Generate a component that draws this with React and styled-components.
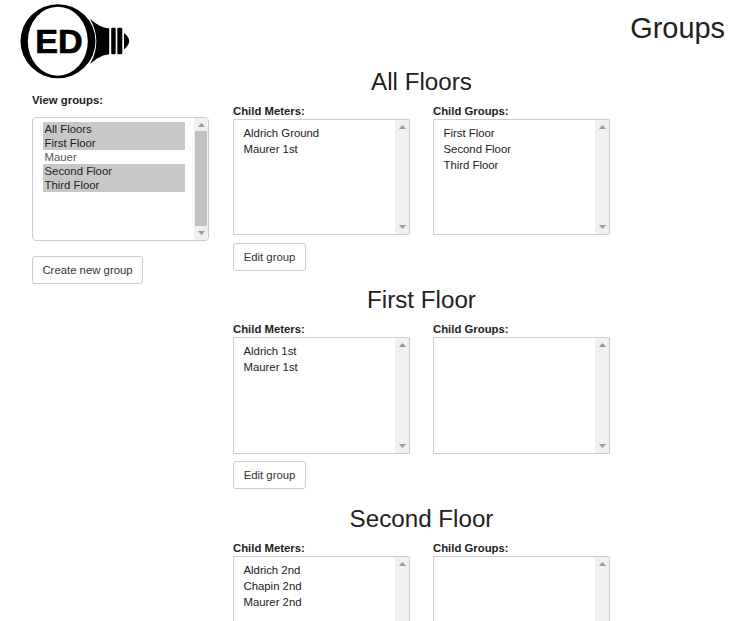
import React from 'react';
import styled, { createGlobalStyle } from 'styled-components';

const GlobalStyle = createGlobalStyle`
  * { box-sizing: border-box; }
  html, body { margin: 0; background: #fff; overflow: hidden; }
  body {
    font-family: "Liberation Sans", Arial, sans-serif;
    font-size: 11.35px;
    line-height: 16px;
    color: #212121;
  }
`;

const Page = styled.div`
  width: 749px;
  height: 621px;
  overflow: hidden;
`;

const Header = styled.header`
  display: flex;
  justify-content: space-between;
  align-items: flex-start;
  height: 67.6px;
  padding: 0 24px 0 16px;
`;

const Title = styled.h1`
  margin: 12px 0 0;
  font-size: 28.9px;
  line-height: 32px;
  font-weight: 400;
`;

const Main = styled.main`
  display: grid;
  grid-template-columns: 177px 377px;
  column-gap: 24px;
  padding-left: 32px;
`;

const Sidebar = styled.aside`
  padding-top: 24.4px;
`;

const Label = styled.div`
  font-weight: 700;
  height: 16px;
  margin-bottom: ${(p) => p.$gap || 0}px;
`;

const ListFrame = styled.div`
  display: flex;
  justify-content: space-between;
  width: 177px;
  height: ${(p) => (p.$rounded ? 124 : 116.5)}px;
  border: 1px solid #ccc;
  border-radius: ${(p) => (p.$rounded ? 4 : 1)}px;
  overflow: hidden;
`;

const Options = styled.ul`
  flex: 1;
  list-style: none;
  margin: 0;
  padding: ${(p) => (p.$compact ? '4px 9px 0 10px' : '5px 10px 0 9.5px')};
`;

const Option = styled.li`
  height: ${(p) => (p.$compact ? 14.1 : 16.1)}px;
  line-height: ${(p) => (p.$compact ? 14.6 : 16)}px;
  padding-left: ${(p) => (p.$compact ? 1.5 : 0)}px;
  background: ${(p) => (p.$selected ? '#c8c8c8' : 'transparent')};
  color: ${(p) => (p.$compact && !p.$selected ? '#555' : '#212121')};
`;

const Track = styled.div`
  display: flex;
  flex-direction: column;
  align-items: center;
  width: 14px;
  padding: 5px 0;
  background: #f0f0f0;
`;

const Thumb = styled.div`
  flex: 1;
  width: 12px;
  margin: 4px 0 5px;
  background: ${(p) => (p.$visible ? '#c1c1c1' : 'transparent')};
`;

const ArrowIcon = styled.svg`
  display: block;
  flex: none;
  width: 7px;
  height: 4px;
`;

const Button = styled.button`
  display: block;
  height: 28px;
  margin: ${(p) => p.$top}px 0 0;
  padding: 0;
  width: ${(p) => p.$width}px;
  border: 1px solid #ccc;
  border-radius: 3px;
  background: #fff;
  color: #333;
  font: inherit;
`;

const Group = styled.section`
  height: 218.5px;
`;

const GroupTitle = styled.h2`
  margin: 0 0 8px;
  height: 27px;
  font-size: 24.2px;
  line-height: 27px;
  font-weight: 400;
  text-align: center;
`;

const Columns = styled.div`
  display: grid;
  grid-template-columns: 177px 177px;
  justify-content: space-between;
`;

const LogoSvg = styled.svg`
  display: block;
  flex: none;
`;

function Logo() {
  return (
    <LogoSvg width="120" height="84" viewBox="16 0 120 84">
      <ellipse cx="58" cy="41.2" rx="37.5" ry="37" fill="#000" />
      <ellipse cx="57.8" cy="41.2" rx="30" ry="34.5" fill="#fff" />
      <path d="M90 19C96 24 102 28 109.2 28.3V54.3C102 55 96 59 90 64C98.5 50 98.5 33 90 19Z" fill="#000" />
      <rect x="111.2" y="27.8" width="4.5" height="26.4" rx="1.2" />
      <rect x="117.3" y="27.8" width="5" height="26.4" rx="1.2" />
      <path d="M124 33Q129.2 37 129.2 41T124 49.5Z" />
      <text
        x="35.2" y="53" textLength="47.5" lengthAdjust="spacingAndGlyphs"
        fontFamily="Liberation Sans, Arial, sans-serif" fontSize="33.5" fontWeight="700"
        stroke="#000" strokeWidth="0.7" strokeLinejoin="round"
      >ED</text>
    </LogoSvg>
  );
}

function Scrollbar({ thumb }) {
  return (
    <Track>
      <ArrowIcon viewBox="0 0 7 4"><path d="M0 4L3.5 0L7 4Z" fill="#999" /></ArrowIcon>
      <Thumb $visible={thumb} />
      <ArrowIcon viewBox="0 0 7 4"><path d="M0 0L3.5 4L7 0Z" fill="#999" /></ArrowIcon>
    </Track>
  );
}

function ListBox({ items, selected = [], compact = false }) {
  return (
    <ListFrame $rounded={compact}>
      <Options $compact={compact}>
        {items.map((item) => (
          <Option key={item} $compact={compact} $selected={selected.includes(item)}>{item}</Option>
        ))}
      </Options>
      <Scrollbar thumb={compact} />
    </ListFrame>
  );
}

const groups = [
  { name: 'All Floors', editable: true, meters: ['Aldrich Ground', 'Maurer 1st'], children: ['First Floor', 'Second Floor', 'Third Floor'] },
  { name: 'First Floor', editable: true, meters: ['Aldrich 1st', 'Maurer 1st'], children: [] },
  { name: 'Second Floor', editable: false, meters: ['Aldrich 2nd', 'Chapin 2nd', 'Maurer 2nd'], children: [] },
];

export default function App() {
  return (
    <Page>
      <GlobalStyle />
      <Header>
        <Logo />
        <Title>Groups</Title>
      </Header>
      <Main>
        <Sidebar>
          <Label $gap={9}>View groups:</Label>
          <ListBox
            compact
            items={['All Floors', 'First Floor', 'Mauer', 'Second Floor', 'Third Floor']}
            selected={['All Floors', 'First Floor', 'Second Floor', 'Third Floor']}
          />
          <Button $top={15} $width={111}>Create new group</Button>
        </Sidebar>
        <div>
          {groups.map((group) => (
            <Group key={group.name}>
              <GroupTitle>{group.name}</GroupTitle>
              <Columns>
                <div>
                  <Label>Child Meters:</Label>
                  <ListBox items={group.meters} />
                  {group.editable && <Button $top={7.5} $width={73}>Edit group</Button>}
                </div>
                <div>
                  <Label>Child Groups:</Label>
                  <ListBox items={group.children} />
                </div>
              </Columns>
            </Group>
          ))}
        </div>
      </Main>
    </Page>
  );
}
